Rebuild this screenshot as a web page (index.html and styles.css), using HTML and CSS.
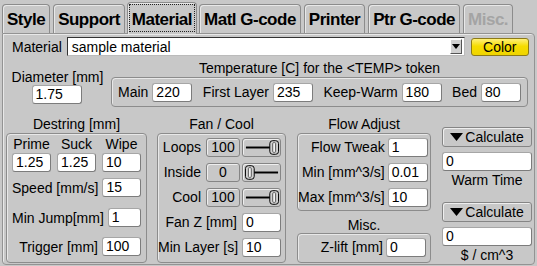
FILE: index.html
```html
<!DOCTYPE html>
<html lang="en">
<head>
    <meta charset="UTF-8">
    <title>Material settings</title>
    <link rel="stylesheet" href="styles.css">
</head>
<body>
    <div class="tabs">
        <div class="tab">Style</div>
        <div class="tab">Support</div>
        <div class="tab active"><span>Material</span></div>
        <div class="tab">Matl G-code</div>
        <div class="tab">Printer</div>
        <div class="tab">Ptr G-code</div>
        <div class="tab disabled">Misc.</div>
    </div>

    <div class="panel">
        <div class="mat-row">
            <span>Material</span>
            <div class="select">
                <span class="select-text">sample material</span>
                <div class="drop">
                    <svg width="8" height="5" viewBox="0 0 8 5"><polygon points="0,0 8,0 4,5" fill="#000"/></svg>
                </div>
            </div>
            <div class="color-btn">Color</div>
        </div>

        <div class="row2">
            <div class="diam">
                <div class="cap">Diameter [mm]</div>
                <div class="field diam-field">1.75</div>
            </div>
            <div class="temp">
                <div class="cap">Temperature [C] for the &lt;TEMP&gt; token</div>
                <div class="group temp-box">
                    <div class="pair"><span>Main</span><div class="field w40">220</div></div>
                    <div class="pair"><span>First Layer</span><div class="field w40">235</div></div>
                    <div class="pair"><span>Keep-Warm</span><div class="field w40">180</div></div>
                    <div class="pair"><span>Bed</span><div class="field w40">80</div></div>
                </div>
            </div>
        </div>

        <div class="row3">
            <div class="col destring-col">
                <div class="cap">Destring [mm]</div>
                <div class="group destring">
                    <div class="tri">
                        <span>Prime</span><span>Suck</span><span>Wipe</span>
                    </div>
                    <div class="tri tri-fields">
                        <div class="field">1.25</div>
                        <div class="field">1.25</div>
                        <div class="field">10</div>
                    </div>
                    <div class="line speed"><span>Speed [mm/s]</span><div class="field">15</div></div>
                    <div class="line jump"><span>Min Jump[mm]</span><div class="field">1</div></div>
                    <div class="line trigger"><span>Trigger [mm]</span><div class="field">100</div></div>
                </div>
            </div>

            <div class="col fan-col">
                <div class="cap">Fan / Cool</div>
                <div class="group fan">
                    <span class="lbl">Loops</span>
                    <div class="btn">100</div>
                    <div class="btn slider">
                        <svg width="37" height="17" viewBox="0 0 37 17">
                            <line x1="2" y1="8.5" x2="27" y2="8.5" stroke="#000" stroke-width="2"/>
                            <rect x="26.5" y="1.5" width="9" height="14" rx="3" fill="#d0d0d0" stroke="#000"/>
                            <rect x="29.5" y="3.5" width="3" height="10" rx="1" fill="#f4f4f4" stroke="#555"/>
                        </svg>
                    </div>

                    <span class="lbl">Inside</span>
                    <div class="btn">0</div>
                    <div class="btn slider">
                        <svg width="37" height="17" viewBox="0 0 37 17">
                            <line x1="10" y1="8.5" x2="35" y2="8.5" stroke="#000" stroke-width="2"/>
                            <rect x="1.5" y="1.5" width="9" height="14" rx="3" fill="#d0d0d0" stroke="#000"/>
                            <rect x="4.5" y="3.5" width="3" height="10" rx="1" fill="#f4f4f4" stroke="#555"/>
                        </svg>
                    </div>

                    <span class="lbl">Cool</span>
                    <div class="btn">100</div>
                    <div class="btn slider">
                        <svg width="37" height="17" viewBox="0 0 37 17">
                            <line x1="2" y1="8.5" x2="27" y2="8.5" stroke="#000" stroke-width="2"/>
                            <rect x="26.5" y="1.5" width="9" height="14" rx="3" fill="#d0d0d0" stroke="#000"/>
                            <rect x="29.5" y="3.5" width="3" height="10" rx="1" fill="#f4f4f4" stroke="#555"/>
                        </svg>
                    </div>

                    <span class="lbl wide">Fan Z [mm]</span>
                    <div class="field">0</div>

                    <span class="lbl wide">Min Layer [s]</span>
                    <div class="field">10</div>
                </div>
            </div>

            <div class="col flow-col">
                <div class="cap">Flow Adjust</div>
                <div class="group flow">
                    <span class="lbl">Flow Tweak</span><div class="field">1</div>
                    <span class="lbl">Min [mm^3/s]</span><div class="field">0.01</div>
                    <span class="lbl">Max [mm^3/s]</span><div class="field">10</div>
                </div>
                <div class="cap misc-cap">Misc.</div>
                <div class="group flow misc">
                    <span class="lbl">Z-lift [mm]</span><div class="field">0</div>
                </div>
            </div>

            <div class="col calc-col">
                <div class="btn calc">
                    <svg width="13" height="8" viewBox="0 0 13 8"><polygon points="0,0 13,0 6.5,8" fill="#000"/></svg>
                    <span>Calculate</span>
                </div>
                <div class="field calc-field">0</div>
                <div class="cap calc-cap">Warm Time</div>
                <div class="btn calc calc-second">
                    <svg width="13" height="8" viewBox="0 0 13 8"><polygon points="0,0 13,0 6.5,8" fill="#000"/></svg>
                    <span>Calculate</span>
                </div>
                <div class="field calc-field">0</div>
                <div class="cap calc-cap">$ / cm^3</div>
            </div>
        </div>
    </div>
</body>
</html>
```

FILE: styles.css
```css
:root {
    --bg: #c8c8c8;
    --edge: #8c8c8c;
    --light: #e8e8e8;
}

* {
    box-sizing: border-box;
    margin: 0;
    padding: 0;
}

body {
    width: 537px;
    height: 266px;
    overflow: hidden;
    background-color: var(--bg);
    color: #000;
    font-family: 'Liberation Sans', Arial, sans-serif;
    font-size: 14px;
}

/* tab strip */

.tabs {
    display: flex;
    align-items: flex-end;
    gap: 3px;
    height: 33px;
    padding-left: 2px;
    position: relative;
    z-index: 1;
}

.tab {
    height: 29px;
    padding: 2px 4px 0;
    border: 1px solid var(--edge);
    border-bottom: none;
    border-radius: 4px 4px 0 0;
    box-shadow: inset 1px 1px 0 var(--light);
    font-size: 17px;
    font-weight: bold;
    letter-spacing: -0.5px;
    line-height: 26px;
    white-space: nowrap;
}

.tab.active {
    height: 32px;
    margin: 0 -1px -1px;
    padding: 1px;
    background-color: var(--bg);
}

.tab.active span {
    display: block;
    height: 28px;
    padding: 2px 2px 0;
    border: 1px dotted #222;
    line-height: 25px;
}

.tab.disabled {
    color: #a4a4a4;
}

/* panel */

.panel {
    width: 533px;
    height: 232px;
    margin-left: 2px;
    padding-top: 3px;
    border: 1px solid #939393;
    border-radius: 0 4px 4px 4px;
    box-shadow: inset 1px 1px 0 var(--light);
}

.mat-row {
    display: flex;
    align-items: center;
    height: 19px;
    padding-left: 9px;
}

.select {
    display: flex;
    align-items: center;
    width: 398px;
    height: 19px;
    margin-left: 5px;
    padding: 0 2px 0 4px;
    background-color: #fff;
    border: 1px solid;
    border-color: #333 #bbb #bbb #333;
}

.select-text {
    flex: 1;
}

.drop {
    display: flex;
    align-items: center;
    justify-content: center;
    width: 12px;
    height: 15px;
    background-color: #d0d0d0;
    border: 1px solid;
    border-color: #fff #555 #555 #fff;
}

.color-btn {
    width: 58px;
    height: 18px;
    margin-left: 6px;
    border: 1px solid #8c7a18;
    border-radius: 3px;
    background: linear-gradient(#fff07a, #f6dc00 45%, #efd400);
    text-align: center;
    line-height: 16px;
}

.cap {
    line-height: 16px;
    text-align: center;
    white-space: nowrap;
}

.group {
    border: 1px solid var(--edge);
    border-radius: 4px;
    box-shadow: inset 1px 1px 0 var(--light);
}

.field {
    height: 19px;
    padding-left: 3px;
    background-color: #fff;
    border: 1px solid;
    border-color: #a6a6a6 #7c7c7c #7c7c7c #a6a6a6;
    border-radius: 3px;
    line-height: 17px;
    white-space: nowrap;
}

.btn {
    height: 19px;
    background-color: var(--bg);
    border: 1px solid #858585;
    border-radius: 3px;
    box-shadow: inset 1px 1px 0 #eee;
    text-align: center;
    line-height: 17px;
}

/* diameter + temperature */

.row2 {
    display: flex;
    margin-top: 4px;
}

.diam {
    display: flex;
    flex-direction: column;
    align-items: center;
    align-self: center;
    width: 91px;
    margin-left: 9px;
    padding-top: 6px;
}

.diam .cap {
    line-height: 15px;
}

.diam-field {
    width: 50px;
    margin-left: -2px;
}

.temp {
    width: 417px;
    margin-left: 8px;
}

.temp-box {
    display: flex;
    justify-content: space-between;
    align-items: center;
    height: 30px;
    margin-top: 1px;
    padding: 0 6px;
}

.pair {
    display: flex;
    align-items: center;
    gap: 4px;
}

.w40 {
    width: 40px;
}

/* bottom groups */

.row3 {
    display: flex;
    align-items: flex-start;
    margin-top: 9px;
    padding-left: 3px;
}

.col .group {
    margin-top: 1px;
}

.destring-col {
    width: 141px;
}

.destring {
    height: 130px;
    padding: 2px 5px 0;
}

.tri {
    display: grid;
    grid-template-columns: 39px 39px 39px;
    column-gap: 6px;
    text-align: center;
    line-height: 16px;
}

.tri-fields {
    margin-top: 1px;
    text-align: left;
}

.line {
    display: flex;
    align-items: center;
    gap: 4px;
}

.line span {
    flex: 1;
    text-align: right;
    white-space: nowrap;
}

.line .field {
    width: 39px;
}

.speed {
    margin-top: 6px;
}

.jump {
    margin-top: 11px;
}

.trigger {
    margin-top: 10px;
}

.fan-col {
    width: 129px;
    margin-left: 10px;
}

.fan {
    display: grid;
    grid-template-columns: 1fr 34px 39px;
    grid-auto-rows: 19px;
    gap: 6px 2px;
    height: 130px;
    padding: 4px 4px 0 0;
}

.lbl {
    padding-right: 3px;
    line-height: 19px;
    text-align: right;
    white-space: nowrap;
}

.lbl.wide {
    grid-column: span 2;
}

.slider {
    display: flex;
    align-items: center;
    padding-left: 1px;
}

.flow-col {
    width: 134px;
    margin-left: 11px;
}

.flow {
    display: grid;
    grid-template-columns: 1fr 40px;
    grid-auto-rows: 19px;
    gap: 6px 0;
    height: 78px;
    padding: 4px 4px 0 0;
}

.misc-cap {
    margin-top: 6px;
}

.group.misc {
    height: 30px;
    margin-top: 0;
}

.calc-col {
    width: 90px;
    margin-left: 11px;
    margin-top: 11px;
}

.calc {
    display: flex;
    align-items: center;
    justify-content: center;
    gap: 2px;
    height: 20px;
}

.calc-field {
    margin-top: 5px;
}

.calc-cap {
    margin-top: 1px;
}

.calc-second {
    margin-top: 14px;
}
```
